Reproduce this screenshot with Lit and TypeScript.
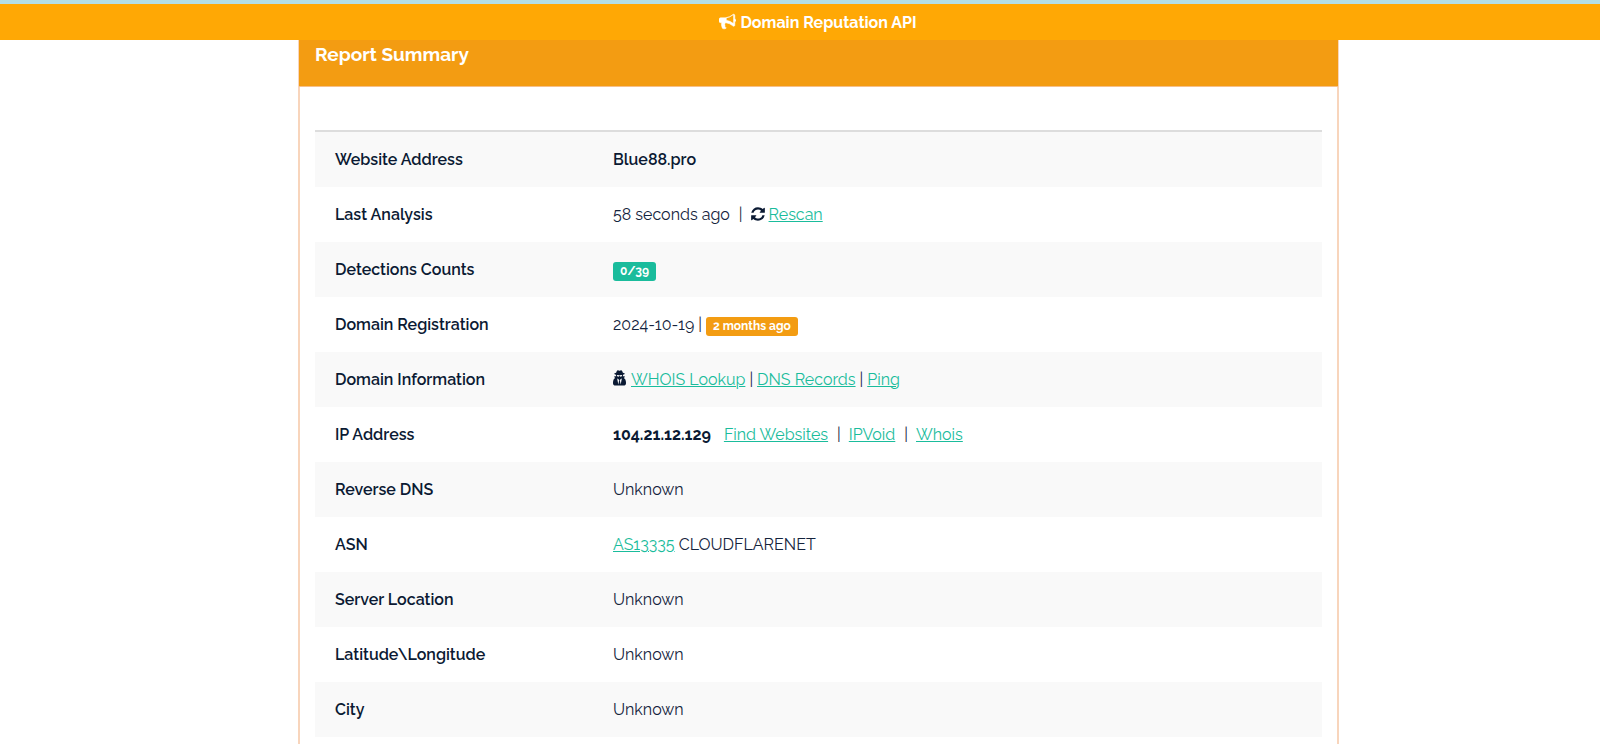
import { LitElement, html, css, svg, TemplateResult } from "lit";
import { customElement } from "lit/decorators.js";

const megaphone = svg`<svg class="icon megaphone" viewBox="0 0 1792 1792" aria-hidden="true"><path d="M1664 640q53 0 90.500 37.500t37.500 90.500-37.500 90.500-90.500 37.500v384q0 52-38 90t-90 38q-417-347-812-380-58 19-91 66t-31 100.500 40 92.500q-20 33-23 65.500t6 58 33.500 55 48 50 61.500 50.500q-29 58-111.500 83t-168.500 11.500-132-55.500q-7-23-29.500-87.500t-32-94.500-23-89-15-101 3.500-98.500 22-110.500h-122q-66 0-113-47t-47-113v-192q0-66 47-113t113-47h480q435 0 896-384 52 0 90 38t38 90v384zM1536 1116v-954q-394 302-768 343v270q377 42 768 341z"/></svg>`;

const refresh = svg`<svg class="icon" viewBox="0 0 1536 1792" aria-hidden="true"><path d="M1511 1056q0 5-1 7-64 268-268 434.500t-478 166.500q-146 0-282.500-55t-243.500-157l-129 129q-19 19-45 19t-45-19-19-45v-448q0-26 19-45t45-19h448q26 0 45 19t19 45-19 45l-137 137q71 66 161 102t187 36q134 0 250-65t186-179q11-17 53-117 8-23 30-23h192q13 0 22.500 9.500t9.500 22.500zM1536 256v448q0 26-19 45t-45 19h-448q-26 0-45-19t-19-45 19-45l138-138q-148-137-349-137-134 0-250 65t-186 179q-11 17-53 117-8 23-30 23h-199q-13 0-22.500-9.500t-9.500-22.500v-7q65-268 270-434.500t480-166.500q146 0 284 55.500t245 156.500l130-129q19-19 45-19t45 19 19 45z"/></svg>`;

const detective = svg`<svg class="icon detective" viewBox="0 0 1408 1792" aria-hidden="true"><path d="M576 1536l96-448-96-128-128-64zM832 1536l128-640-128 64-96 128zM992 526q-2-4-4-6-10-8-96-8-70 0-167 19-7 2-21 2t-21-2q-97-19-167-19-86 0-96 8-2 2-4 6 2 18 4 27 2 3 7.500 6.500t7.500 10.500q2 4 7.500 20.500t7 20.500 7.500 17 8.500 17 9 14 12 13.500 14 9.500 17.500 8 20.500 4 24.500 2q36 0 59-12.500t32.500-30 14.500-34.500 11.500-29.500 17.500-12.500h12q11 0 17.500 12.500t11.500 29.500 14.500 34.500 32.500 30 59 12.500q13 0 24.500-2t20.500-4 17.500-8 14-9.500 12-13.500 9-14 8.500-17 7.500-17 7-20.500 7.500-20.500q2-7 7.500-10.500t7.500-6.500q2-9 4-27zM1408 1405q0 121-73 190t-194 69h-874q-121 0-194-69t-73-190q0-61 4.500-118t19-125.500 37.500-123.500 63.500-103.500 93.500-74.500l-90-220h214q-22-64-22-128 0-12 2-32-194-40-194-96 0-57 210-99 17-62 51.500-134t70.500-114q32-37 76-37 30 0 84 31t84 31 84-31 84-31q44 0 76 37 36 42 70.500 114t51.500 134q210 42 210 99 0 56-194 96 7 81-20 160h214l-82 225q63 33 107.500 96.500t65.500 143.500 29 151.500 8 148.500z"/></svg>`;

const link = (label: string) => html`<a href="#">${label}</a>`;
const bar = html`<span class="bar">|</span>`;
const wideBar = html`<span class="bar wide">|</span>`;

const rows: [string, TemplateResult | string][] = [
  ["Website Address", html`<strong>Blue88.pro</strong>`],
  ["Last Analysis", html`58 seconds ago${wideBar}${refresh}${link("Rescan")}`],
  ["Detections Counts", html`<span class="badge clean">0/39</span>`],
  ["Domain Registration", html`2024-10-19${bar}<span class="badge recent">2 months ago</span>`],
  ["Domain Information", html`${detective}${link("WHOIS Lookup")}${bar}${link("DNS Records")}${bar}${link("Ping")}`],
  ["IP Address", html`<strong class="ip">104.21.12.129</strong>${link("Find Websites")}${wideBar}${link("IPVoid")}${wideBar}${link("Whois")}`],
  ["Reverse DNS", "Unknown"],
  ["ASN", html`${link("AS13335")} CLOUDFLARENET`],
  ["Server Location", "Unknown"],
  ["Latitude\\Longitude", "Unknown"],
  ["City", "Unknown"],
];

@customElement("app-root")
export class AppRoot extends LitElement {
  static styles = css`
    :host {
      display: flex;
      flex-direction: column;
      min-height: 100vh;
      background: #fff;
      color: #14233c;
      font: 400 16px/24px Raleway, Lato, sans-serif;
    }
    * { box-sizing: border-box; }
    .banner {
      border-top: 4px solid #b3dfe8;
      background: #ffa805;
      padding: 7px 0 5px 36px;
      text-align: center;
    }
    .banner a { color: #fff; font-weight: 700; text-decoration: none; }
    main {
      flex: 1;
      display: flex;
      justify-content: center;
      padding-left: 37px;
    }
    .card {
      flex: 0 1 1041px;
      min-width: 0;
      border: solid #f8d5bc;
      border-width: 0 2px;
    }
    h2 {
      margin: 0 -1px;
      padding: 0 16px 18px;
      background: #f39c12;
      border-bottom: 1px solid #f6c08a;
      color: #fff;
      font-size: 19px;
      line-height: 28px;
      font-weight: 700;
    }
    .body { padding: 43px 15px 0; }
    table {
      width: 100%;
      border-collapse: separate;
      border-spacing: 0;
      border-top: 2px solid #ddd;
    }
    tr { height: 55px; }
    tr:nth-child(odd) { background: #f9f9f9; }
    th, td { padding: 0 20px; text-align: left; }
    th { width: 278px; padding-right: 0; font-weight: 600; color: #0b1a33; }
    strong { font-weight: 600; color: #0b1a33; }
    a { color: #1abc9c; text-decoration-thickness: 1px; text-underline-offset: 1px; }
    .bar { margin: 0 4px; }
    .wide { margin: 0 8px 0 9px; }
    .ip { font-weight: 700; margin-right: 13px; }
    .icon {
      width: 14px;
      height: 16px;
      margin-right: 4px;
      vertical-align: -2px;
      fill: #0b1a33;
    }
    .megaphone { width: 17px; height: 17px; fill: #fff; stroke: #fff; stroke-width: 60; }
    .detective { width: 13px; height: 17px; margin-right: 5px; }
    .badge {
      display: inline-block;
      padding: 0 7px;
      border-radius: 3px;
      color: #fff;
      font-size: 12px;
      font-weight: 700;
      line-height: 19px;
    }
    .clean { background: #1abc9c; }
    .recent { background: #f39c12; }
  `;

  render() {
    return html`
      <header class="banner"><a href="#">${megaphone}Domain Reputation API</a></header>
      <main>
        <section class="card">
          <h2>Report Summary</h2>
          <div class="body">
            <table>
              <tbody>
                ${rows.map(([label, value]) => html`<tr><th scope="row">${label}</th><td>${value}</td></tr>`)}
              </tbody>
            </table>
          </div>
        </section>
      </main>
    `;
  }
}
